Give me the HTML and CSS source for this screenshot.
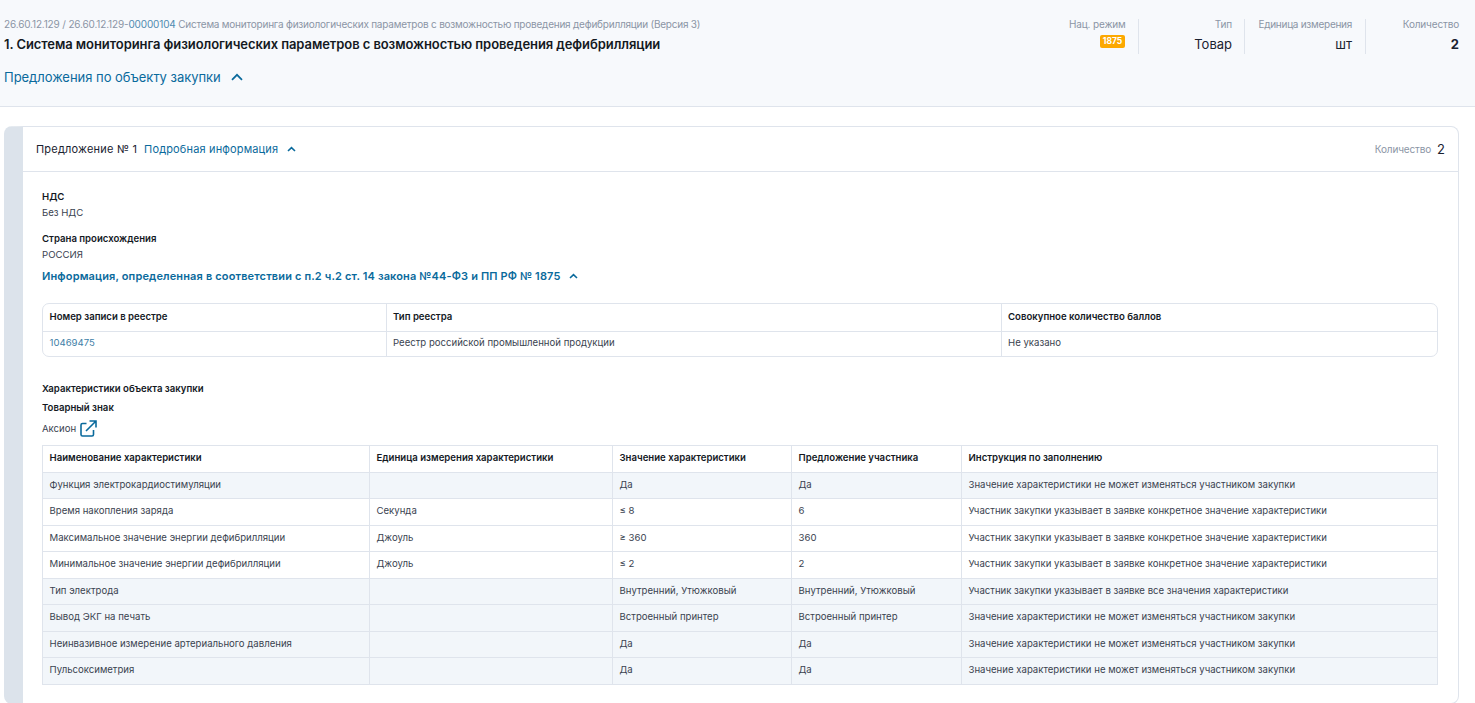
FILE: index.html
```
<!DOCTYPE html>
<html lang="ru">
<head>
<meta charset="utf-8">
<title>Предложения по объекту закупки</title>
<link rel="stylesheet" href="styles.css">
</head>
<body>
<header class="top">
  <div class="top-row">
    <div class="top-main">
      <div class="crumbs"><span class="crumb-code">26.60.12.129 / 26.60.12.129-<span class="crumb-link">00000104</span></span> Система мониторинга физиологических параметров с возможностью проведения дефибрилляции (Версия 3)</div>
      <div class="title">1. Система мониторинга физиологических параметров с возможностью проведения дефибрилляции</div>
    </div>
    <div class="metas">
      <div class="meta meta-mode"><div class="meta-label">Нац. режим</div><span class="badge">1875</span></div>
      <div class="meta meta-type"><div class="meta-label">Тип</div><div class="meta-value">Товар</div></div>
      <div class="meta meta-unit"><div class="meta-label">Единица измерения</div><div class="meta-value">шт</div></div>
      <div class="meta meta-qty"><div class="meta-label">Количество</div><div class="meta-value meta-strong">2</div></div>
    </div>
  </div>
  <div class="offers-link">Предложения по объекту закупки
    <svg class="chev-lg" viewBox="0 0 12 8" width="12" height="8"><path d="M1 6.800 6 1.800l5 5" fill="none" stroke="currentColor" stroke-width="1.700"/></svg>
  </div>
</header>
<main class="card">
  <div class="card-head">
    <div class="card-head-left"><span class="offer-no">Предложение № 1</span><span class="detail-link">Подробная информация</span>
      <svg class="chev-sm" viewBox="0 0 9 6" width="9" height="6"><path d="M1 5 4.500 1.700 8 5" fill="none" stroke="currentColor" stroke-width="1.600"/></svg>
    </div>
    <div class="card-head-right"><span class="qty-label">Количество</span><span class="qty-value">2</span></div>
  </div>
  <div class="card-body">
    <div class="field field-vat"><div class="field-label">НДС</div><div class="field-value">Без НДС</div></div>
    <div class="field field-country"><div class="field-label">Страна происхождения</div><div class="field-value">РОССИЯ</div></div>
    <div class="info-link">Информация, определенная в соответствии с п.2 ч.2 ст. 14 закона №44-ФЗ и ПП РФ № 1875
      <svg class="chev-sm" viewBox="0 0 9 6" width="9" height="6"><path d="M1 5 4.500 1.700 8 5" fill="none" stroke="currentColor" stroke-width="1.600"/></svg>
    </div>
    <div class="registry-wrap">
      <table class="registry">
        <colgroup><col class="rc1"><col class="rc2"><col class="rc3"></colgroup>
        <thead><tr><th>Номер записи в реестре</th><th>Тип реестра</th><th>Совокупное количество баллов</th></tr></thead>
        <tbody><tr><td class="link-cell">10469475</td><td>Реестр российской промышленной продукции</td><td>Не указано</td></tr></tbody>
      </table>
    </div>
    <div class="section-title">Характеристики объекта закупки</div>
    <div class="section-title section-tm">Товарный знак</div>
    <div class="brand">Аксион
      <svg class="ext" viewBox="0 0 17 17" width="17" height="17"><path d="M6.500 3.500H2.500A1.500 1.500 0 0 0 1 5v9.500A1.500 1.500 0 0 0 2.500 16H12a1.500 1.500 0 0 0 1.500-1.500V10M6 11 15.500 1.500M9.500 1H16v6.500" fill="none" stroke="currentColor" stroke-width="1.600"/></svg>
    </div>
    <table class="chars">
      <colgroup><col class="c1"><col class="c2"><col class="c3"><col class="c4"><col class="c5"></colgroup>
      <thead><tr><th>Наименование характеристики</th><th>Единица измерения характеристики</th><th>Значение характеристики</th><th>Предложение участника</th><th>Инструкция по заполнению</th></tr></thead>
      <tbody>
        <tr class="tint"><td>Функция электрокардиостимуляции</td><td></td><td>Да</td><td>Да</td><td>Значение характеристики не может изменяться участником закупки</td></tr>
        <tr><td>Время накопления заряда</td><td>Секунда</td><td>≤ 8</td><td>6</td><td>Участник закупки указывает в заявке конкретное значение характеристики</td></tr>
        <tr><td>Максимальное значение энергии дефибрилляции</td><td>Джоуль</td><td>≥ 360</td><td>360</td><td>Участник закупки указывает в заявке конкретное значение характеристики</td></tr>
        <tr><td>Минимальное значение энергии дефибрилляции</td><td>Джоуль</td><td>≤ 2</td><td>2</td><td>Участник закупки указывает в заявке конкретное значение характеристики</td></tr>
        <tr class="tint"><td>Тип электрода</td><td></td><td>Внутренний, Утюжковый</td><td>Внутренний, Утюжковый</td><td>Участник закупки указывает в заявке все значения характеристики</td></tr>
        <tr class="tint"><td>Вывод ЭКГ на печать</td><td></td><td>Встроенный принтер</td><td>Встроенный принтер</td><td>Значение характеристики не может изменяться участником закупки</td></tr>
        <tr class="tint"><td>Неинвазивное измерение артериального давления</td><td></td><td>Да</td><td>Да</td><td>Значение характеристики не может изменяться участником закупки</td></tr>
        <tr class="tint"><td>Пульсоксиметрия</td><td></td><td>Да</td><td>Да</td><td>Значение характеристики не может изменяться участником закупки</td></tr>
      </tbody>
    </table>
  </div>
</main>
</body>
</html>
```
FILE: styles.css
```
* { box-sizing: border-box; }
html, body { margin: 0; height: 703px; overflow: hidden; }
body { font-family: Inter, "Noto Sans", sans-serif; font-size: 10px; color: #1a2230; background: #fff; }

.top { height: 107px; background: #f7f9fc; border-bottom: 1px solid #dfe4ec; padding: 17px 16px 0 4px; }
.top-row { display: flex; justify-content: space-between; align-items: flex-start; }
.crumbs { font-size: 10px; line-height: 14px; color: #8b95a5; letter-spacing: -0.22px; }
.crumb-code { letter-spacing: -0.15px; }
.crumb-link { color: #4f8bb0; }
.title { margin-top: 4px; font-size: 13px; line-height: 18px; font-weight: 600; color: #14191f; letter-spacing: -0.08px; }
.offers-link { margin-top: 14px; font-size: 13px; line-height: 18px; color: #0a6a9c; letter-spacing: -0.03px; display: flex; align-items: center; gap: 10px; }

.metas { display: flex; margin-top: 2px; }
.meta { text-align: right; height: 35px; padding-right: 13px; border-right: 1px solid #dfe4ec; white-space: nowrap; }
.meta:last-child { border-right: 0; padding-right: 0; }
.meta-label { font-size: 10px; line-height: 14px; color: #8b95a5; letter-spacing: -0.15px; margin-top: -2px; }
.meta-unit .meta-label { letter-spacing: -0.27px; }
.meta-value { margin-top: 5px; font-size: 13px; line-height: 16px; color: #1a2230; }
.meta-strong { font-weight: 700; }
.badge { display: inline-block; margin-top: 4px; width: 25px; height: 13px; border-radius: 2px; background: #fca800; color: #fff; font-size: 8.500px; line-height: 13px; font-weight: 700; text-align: center; }
.meta-mode { width: 70px; }
.meta-type { width: 106px; padding-right: 12px; }
.meta-unit { width: 121px; }
.meta-qty { width: 93px; }

.card { margin: 19px 0 0 4px; width: 1455px; height: 578px; border: 1px solid #dfe4ec; border-left: 19px solid #dce3eb; border-radius: 8px; background: #fff; }
.card-head { height: 45px; border-bottom: 1px solid #dfe4ec; padding: 0 13px; display: flex; align-items: center; justify-content: space-between; }
.card-head-left { display: flex; align-items: center; font-size: 11px; }
.offer-no { color: #1a2230; letter-spacing: 0.2px; }
.detail-link { margin-left: 7px; margin-right: 9px; color: #0a6a9c; letter-spacing: 0.15px; }
.chev-sm { color: #0a6a9c; }
.chev-lg { color: #0a6a9c; }
.card-head-right { display: flex; align-items: center; gap: 6px; }
.qty-label { font-size: 10px; color: #8b95a5; letter-spacing: -0.15px; }
.qty-value { font-size: 13px; }

.card-body { padding: 18px 20px 0 19px; }
.field-label { font-size: 9.600px; line-height: 14px; font-weight: 600; color: #14191f; }
.field-value { margin-top: 2px; font-size: 9.600px; line-height: 14px; color: #3a4350; }
.field-country { margin-top: 12px; }
.info-link { margin-top: 6px; font-size: 11px; line-height: 16px; font-weight: 600; color: #0a6a9c; letter-spacing: 0.14px; display: flex; align-items: center; gap: 8px; }

.registry-wrap { margin-top: 19px; border: 1px solid #dfe4ec; border-radius: 7px; overflow: hidden; }
table { border-collapse: collapse; table-layout: fixed; width: 100%; }
th { font-size: 9.600px; font-weight: 600; text-align: left; color: #14191f; }
td { font-size: 9.600px; color: #3a4350; }
th, td { padding: 0 0 0 6.500px; }
.registry th { height: 27px; border-bottom: 1px solid #dfe4ec; padding-bottom: 1px; }
.registry td { height: 25px; padding-bottom: 2px; }
.registry th + th, .registry td + td { border-left: 1px solid #dfe4ec; }
.rc1 { width: 343px; }
.rc2 { width: 615px; }
.link-cell { color: #3f7fa8; }

.section-title { font-size: 9.600px; line-height: 14px; font-weight: 600; color: #14191f; }
.registry-wrap + .section-title { margin-top: 25px; }
.section-tm { margin-top: 5px; }
.brand { margin-top: 2px; height: 22px; font-size: 9.600px; color: #3a4350; display: flex; align-items: center; gap: 4px; }
.ext { color: #0a6a9c; }

.chars { margin-top: 6px; border: 1px solid #dfe4ec; }
.chars th, .chars td { height: 26.500px; border: 1px solid #dfe4ec; padding-bottom: 2px; }
.chars .tint td { background: #f2f6fa; }
.c1 { width: 327px; }
.c2 { width: 243px; }
.c3 { width: 179px; }
.c4 { width: 170px; }
```
